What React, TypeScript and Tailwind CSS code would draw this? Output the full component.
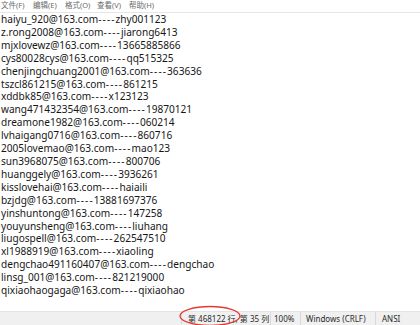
import React from "react";

const lines = [
  "haiyu_920@163.com----zhy001123",
  "z.rong2008@163.com----jiarong6413",
  "mjxlovewz@163.com----13665885866",
  "cys80028cys@163.com----qq515325",
  "chenjingchuang2001@163.com----363636",
  "tszcl861215@163.com----861215",
  "xddbk85@163.com----x123123",
  "wang471432354@163.com----19870121",
  "dreamone1982@163.com----060214",
  "lvhaigang0716@163.com----860716",
  "2005lovemao@163.com----mao123",
  "sun3968075@163.com----800706",
  "huanggely@163.com----3936261",
  "kisslovehai@163.com----haiaili",
  "bzjdg@163.com----13881697376",
  "yinshuntong@163.com----147258",
  "youyunsheng@163.com----liuhang",
  "liugospell@163.com----262547510",
  "xl1988919@163.com----xiaoling",
  "dengchao491160407@163.com----dengchao",
  "linsg_001@163.com----821219000",
  "qixiaohaogaga@163.com----qixiaohao",
];

const menus = ["文件(F)", "编辑(E)", "格式(O)", "查看(V)", "帮助(H)"];

export default function App() {
  return (
    <div
      className="relative w-[420px] h-[325px] overflow-hidden bg-white flex flex-col"
      style={{ fontFamily: '"Noto Sans", "Noto Sans CJK SC", sans-serif' }}
    >
      <div className="h-[12px] flex items-center gap-[8px] pl-[1px] border-b border-[#e6e6e6] box-content text-[7.5px] text-[#6b6b6b] leading-none">
        {menus.map((m) => (
          <span key={m} className="w-[24px] whitespace-nowrap">
            {m}
          </span>
        ))}
      </div>
      <div className="flex-1 text-[10.1px] leading-[12.9px] text-[#161616] pl-[1px]">
        {lines.map((l) => {
          const [a, b] = l.split("----");
          return (
            <div key={l} className="whitespace-nowrap">
              {a}
              <span className="tracking-[1.1px]">----</span>
              {b}
            </div>
          );
        })}
      </div>
      <div className="h-[14px] bg-[#f0f0f0] border-t border-[#e3e3e3] flex justify-end text-[8px] text-[#2a2a2a] leading-none">
        <div className="w-[89px] border-l border-[#d9d9d9] flex items-center pl-[6px] whitespace-nowrap">
          第 468122 行, 第 35 列
        </div>
        <div className="w-[30px] border-l border-[#d9d9d9] flex items-center pl-[3px]">
          100%
        </div>
        <div className="w-[75px] border-l border-[#d9d9d9] flex items-center pl-[5px] whitespace-nowrap">
          Windows (CRLF)
        </div>
        <div className="w-[45px] border-l border-[#d9d9d9] flex items-center pl-[6px]">
          ANSI
        </div>
      </div>
      <svg
        className="absolute left-0 top-0 pointer-events-none"
        width="420"
        height="325"
      >
        <ellipse
          cx="210"
          cy="316"
          rx="30"
          ry="9.5"
          fill="none"
          stroke="#e53935"
          strokeWidth="1.3"
        />
      </svg>
    </div>
  );
}
